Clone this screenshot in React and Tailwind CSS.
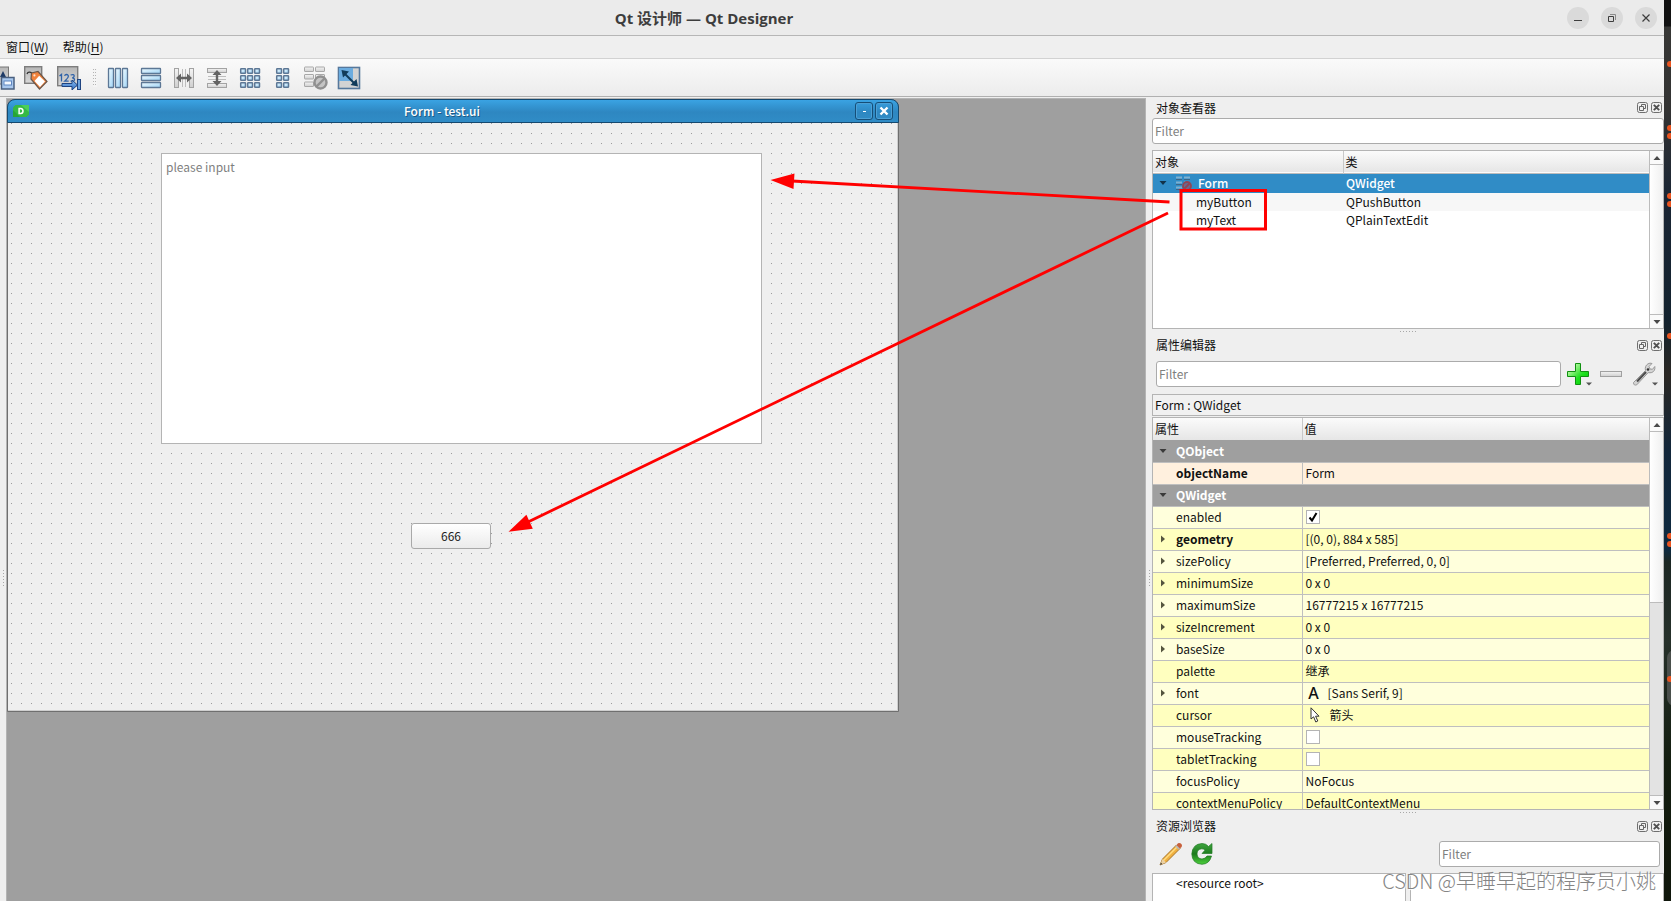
import React from 'react';

const properties = [
  { name: 'QObject', group: true },
  { name: 'objectName', value: 'Form', bold: true, bg: 'bg-[#fff0de]' },
  { name: 'QWidget', group: true },
  { name: 'enabled', check: true, checked: true, bg: 'bg-[#ffffdc]' },
  { name: 'geometry', value: '[(0, 0), 884 x 585]', bold: true, arrow: true, bg: 'bg-[#ffffbf]' },
  { name: 'sizePolicy', value: '[Preferred, Preferred, 0, 0]', arrow: true, bg: 'bg-[#ffffdc]' },
  { name: 'minimumSize', value: '0 x 0', arrow: true, bg: 'bg-[#ffffbf]' },
  { name: 'maximumSize', value: '16777215 x 16777215', arrow: true, bg: 'bg-[#ffffdc]' },
  { name: 'sizeIncrement', value: '0 x 0', arrow: true, bg: 'bg-[#ffffbf]' },
  { name: 'baseSize', value: '0 x 0', arrow: true, bg: 'bg-[#ffffdc]' },
  { name: 'palette', value: '继承', bg: 'bg-[#ffffbf]' },
  { name: 'font', value: '[Sans Serif, 9]', arrow: true, icon: 'font', bg: 'bg-[#ffffdc]' },
  { name: 'cursor', value: '箭头', icon: 'cursor', bg: 'bg-[#ffffbf]' },
  { name: 'mouseTracking', check: true, bg: 'bg-[#ffffdc]' },
  { name: 'tabletTracking', check: true, bg: 'bg-[#ffffbf]' },
  { name: 'focusPolicy', value: 'NoFocus', bg: 'bg-[#ffffdc]' },
  { name: 'contextMenuPolicy', value: 'DefaultContextMenu', bg: 'bg-[#ffffbf]' },
];

// gradients shared by all the icons
const IconDefs = () => (
  <svg className="absolute h-0 w-0" aria-hidden="true">
    <defs>
      <linearGradient id="blueBar" x1="0" y1="0" x2="1" y2="1">
        <stop offset="0" stopColor="#eefaff" />
        <stop offset="1" stopColor="#9fd4f6" />
      </linearGradient>
      <linearGradient id="greyBar" x1="0" y1="0" x2="0" y2="1">
        <stop offset="0" stopColor="#f4f4f4" />
        <stop offset="1" stopColor="#cfcfcf" />
      </linearGradient>
      <linearGradient id="panel" x1="0" y1="0" x2="0" y2="1">
        <stop offset="0" stopColor="#b6b6b6" />
        <stop offset="1" stopColor="#d8d8d8" />
      </linearGradient>
      <linearGradient id="plus" x1="0" y1="0" x2="1" y2="1">
        <stop offset="0.2" stopColor="#b4f7a0" />
        <stop offset="0.6" stopColor="#1fe01f" />
        <stop offset="1" stopColor="#00c800" />
      </linearGradient>
      <linearGradient id="refresh" x1="0" y1="0" x2="0" y2="1">
        <stop offset="0" stopColor="#3fa53f" />
        <stop offset="0.5" stopColor="#1c7a1c" />
        <stop offset="1" stopColor="#4cd03c" />
      </linearGradient>
      <linearGradient id="arrowBlue" x1="0" y1="0" x2="0" y2="1">
        <stop offset="0" stopColor="#8fc0f2" />
        <stop offset="1" stopColor="#2f6cc0" />
      </linearGradient>
    </defs>
  </svg>
);

const Icon = ({ children, size = 24 }) => (
  <svg width={size} height={size} viewBox={`0 0 ${size} ${size}`} fill="none" className="block" aria-hidden="true">
    {children}
  </svg>
);

const BuddyIcon = () => (
  <Icon>
    <rect x="1.5" y="1" width="16" height="17" fill="url(#panel)" stroke="#777" />
    <path d="M9 11 L12 5 L15 11 Z" fill="#1d3a66" />
    <rect x="10.5" y="11.5" width="12.5" height="11.5" fill="#a9c8ee" stroke="#4a6080" strokeWidth="1.5" />
    <rect x="13" y="15" width="7.5" height="4" fill="#f4f9ff" stroke="#5f86c0" />
  </Icon>
);

const TagIcon = () => (
  <Icon>
    <rect x="0.7" y="0.7" width="17" height="16.6" fill="url(#panel)" stroke="#7d7d7d" strokeWidth="1.4" />
    <path d="M3 8 C4 5 7 6 9 8" stroke="#333" strokeWidth="1.3" />
    <path d="M7.5 7 L14 5.5 L23 15.5 L15.5 23 L7 13 Z" fill="#f0823c" stroke="#6b5648" strokeWidth="1.2" />
    <path d="M15.2 9.8 L21 15.5 L16 21 L10.5 15 Z" fill="#fff" />
    <circle cx="10.4" cy="9.4" r="1.1" fill="#ffe0c8" />
  </Icon>
);

const TabOrderIcon = () => (
  <Icon>
    <rect x="0.7" y="0.7" width="20" height="19" fill="url(#panel)" stroke="#7d7d7d" strokeWidth="1.4" />
    <path
      d="M2.5 10 l2-1.6 v7 M7.5 9.8 q0.8-1.4 2-1.3 q2 0.2 1.8 2 q-0.2 1.4-3.6 4.6 h4 M13.6 9 q3.6-1.2 3.6 1 q0 1.6-2 1.8 q2.3 0.2 2.3 2 q-0.2 2.4-4 1.2"
      stroke="#2f62a8"
      strokeWidth="1.3"
    />
    <path d="M5 17.5 h10 v-3.5 l5.5 5 l-5.5 5 v-3.5 h-10 z" fill="url(#arrowBlue)" stroke="#1f4480" />
    <rect x="20.5" y="13.5" width="3" height="10" fill="#6fa4de" stroke="#1f4480" />
  </Icon>
);

const HLayoutIcon = () => (
  <Icon>
    {[2, 9, 16].map((x) => (
      <rect key={x} x={x + 0.5} y="2.5" width="5" height="19" rx="0.5" fill="url(#blueBar)" stroke="#5c7795" strokeWidth="1.3" />
    ))}
  </Icon>
);

const VLayoutIcon = () => (
  <Icon>
    {[2, 9, 16].map((y) => (
      <rect key={y} x="2.5" y={y + 0.5} width="19" height="5" rx="0.5" fill="url(#blueBar)" stroke="#5c7795" strokeWidth="1.3" />
    ))}
  </Icon>
);

const HSplitIcon = () => (
  <Icon>
    {[2.5, 17.5].map((x) => (
      <rect key={x} x={x} y="2.5" width="4" height="19" fill="url(#greyBar)" stroke="#a3a3a3" />
    ))}
    <path d="M10.5 3 v18 M13.5 3 v18" stroke="#bdbdbd" />
    <path d="M4 12 L9 7.5 V10.8 H15 V7.5 L20 12 L15 16.5 V13.2 H9 V16.5 Z" fill="#636363" />
  </Icon>
);

const VSplitIcon = () => (
  <Icon>
    {[2.5, 17.5].map((y) => (
      <rect key={y} x="2.5" y={y} width="19" height="4" fill="url(#greyBar)" stroke="#a3a3a3" />
    ))}
    <path d="M3 10.5 h18 M3 13.5 h18" stroke="#bdbdbd" />
    <path d="M12 4 L16.5 9 H13.2 V15 H16.5 L12 20 L7.5 15 H10.8 V9 H7.5 Z" fill="#636363" />
  </Icon>
);

const GridIcon = () => (
  <Icon>
    {[2, 9, 16].map((y) =>
      [2, 9, 16].map((x) => (
        <rect key={`${x}-${y}`} x={x + 0.7} y={y + 0.7} width="4.8" height="4.6" rx="0.6" fill="url(#blueBar)" stroke="#5c7795" strokeWidth="1.5" />
      ))
    )}
  </Icon>
);

const FormLayoutIcon = () => (
  <Icon>
    {[2, 9, 16].map((y) =>
      [5, 12].map((x) => (
        <rect key={`${x}-${y}`} x={x + 0.7} y={y + 0.7} width="4.8" height="4.6" rx="0.6" fill="url(#blueBar)" stroke="#5c7795" strokeWidth="1.5" />
      ))
    )}
  </Icon>
);

const BreakLayoutIcon = () => (
  <Icon>
    {[0.5, 8, 15.5].map((y) =>
      [0.5, 11.5].map((x) => (
        <rect key={`${x}-${y}`} x={x} y={y + 0.5} width="9" height="4.5" rx="0.5" fill="url(#greyBar)" stroke="#a8a8a8" />
      ))
    )}
    <circle cx="16.5" cy="16.5" r="6" fill="#c4c4c4" stroke="#909090" strokeWidth="2.4" />
    <path d="M12.5 20.5 L20.5 12.5" stroke="#909090" strokeWidth="2.4" />
  </Icon>
);

const AdjustSizeIcon = () => (
  <Icon>
    <rect x="1.5" y="1.5" width="21" height="21" fill="#d3d3d3" stroke="#56789c" strokeWidth="1.6" />
    <rect x="2" y="2" width="14" height="13" fill="#6cacdf" />
    <path d="M7 7 L18 18" stroke="#123c5a" strokeWidth="2" />
    <path d="M4.5 4 L12 5.5 L6 11.5 Z M21 20.5 L13.5 19 L19.5 13 Z" fill="#123c5a" />
  </Icon>
);

const toolsBefore = [
  { label: 'Edit Buddies', Glyph: BuddyIcon },
  { label: 'Edit Tags', Glyph: TagIcon },
  { label: 'Edit Tab Order', Glyph: TabOrderIcon },
];

const toolsAfter = [
  { label: 'Lay Out Horizontally', Glyph: HLayoutIcon },
  { label: 'Lay Out Vertically', Glyph: VLayoutIcon },
  { label: 'Horizontal Splitter', Glyph: HSplitIcon },
  { label: 'Vertical Splitter', Glyph: VSplitIcon },
  { label: 'Lay Out in a Grid', Glyph: GridIcon },
  { label: 'Lay Out in a Form', Glyph: FormLayoutIcon },
  { label: 'Break Layout', Glyph: BreakLayoutIcon },
  { label: 'Adjust Size', Glyph: AdjustSizeIcon },
];

const ToolButton = ({ label, Glyph }) => (
  <button type="button" aria-label={label} className="shrink-0">
    <Glyph />
  </button>
);

// the window runs off the left edge of the desktop, so the title is centred on the wider frame
const TitleBar = () => (
  <header className="-ml-64 grid h-9 shrink-0 grid-cols-[1fr_auto_1fr] items-center border-b border-[#b6b6b6] bg-[#ebebeb] px-[7px]">
    <span />
    <h1 className="font-['Open_Sans','Noto_Sans_CJK_SC',sans-serif] text-[15px] font-bold text-[#3d3d3d]">
      Qt 设计师 — Qt Designer
    </h1>
    <div className="flex justify-end gap-3">
      <button type="button" aria-label="Minimize" className="flex size-[22px] items-center justify-center rounded-full bg-[#dadada]">
        <Icon size={10}>
          <path d="M1 7.5 h8" stroke="#3d3d3d" />
        </Icon>
      </button>
      <button type="button" aria-label="Restore" className="flex size-[22px] items-center justify-center rounded-full bg-[#dadada]">
        <Icon size={10}>
          <path d="M1.5 3.5 h5 v5 h-5 z" stroke="#3d3d3d" />
          <path d="M3 1.5 h5.5 v5.5" stroke="#8a8a8a" />
        </Icon>
      </button>
      <button type="button" aria-label="Close" className="flex size-[22px] items-center justify-center rounded-full bg-[#dadada]">
        <Icon size={10}>
          <path d="M1.5 1.5 l7 7 M8.5 1.5 l-7 7" stroke="#3d3d3d" strokeWidth="1.2" />
        </Icon>
      </button>
    </div>
  </header>
);

const MenuBar = () => (
  <nav className="flex h-[23px] shrink-0 items-center gap-[14px] border-b border-[#d2d2d2] pl-[6px]">
    <button type="button">
      窗口(<span className="underline underline-offset-2">W</span>)
    </button>
    <button type="button">
      帮助(<span className="underline underline-offset-2">H</span>)
    </button>
  </nav>
);

const ToolBar = () => (
  <div className="flex h-[38px] shrink-0 items-center gap-[9px] overflow-hidden border-b border-[#b0b0b0] bg-linear-to-b from-[#fafafa] to-[#ececec]">
    <div className="-ml-[9px] flex shrink-0 gap-[9px]">
      {toolsBefore.map((tool) => (
        <ToolButton key={tool.label} {...tool} />
      ))}
    </div>
    <span className="ml-[3px] h-[18px] w-1 bg-[linear-gradient(90deg,transparent_1px,#f4f4f4_1px),linear-gradient(#b4b4b4_1px,#f4f4f4_1px)] bg-[size:2px_3px]" />
    {toolsAfter.map((tool) => (
      <ToolButton key={tool.label} {...tool} />
    ))}
  </div>
);

const FormWindow = () => (
  <section className="absolute top-0 left-0 flex h-[613px] w-[892px] flex-col rounded-t-lg border border-[#6f6f6f]">
    <div className="-mx-px -mt-px grid h-6 shrink-0 grid-cols-[auto_1fr_auto] items-center rounded-t-lg border border-[#15496f] bg-linear-to-b from-[#3aa3e3] from-0% via-[#2e87c1] via-55% to-[#308cc6] px-[5px]">
      <svg width="16" height="12" viewBox="0 0 16 12" aria-hidden="true">
        <path d="M2.5 0 H16 V9.5 L13.5 12 H0 V2.5 Z" fill="#35b944" />
        <path d="M8 0 H16 V7 Z" fill="#4ccf5a" />
        <path d="M0 5 L7 12 H0 Z" fill="#28a436" />
        <path d="M6.1 3.4 h1.6 q2.3 0.2 2.3 2.6 t-2.3 2.6 h-1.6 z" fill="none" stroke="#fff" strokeWidth="1.5" />
      </svg>
      <h2 className="text-center font-medium text-white [text-shadow:1px_1px_0_#1d5a86]">Form - test.ui</h2>
      <div className="flex justify-end gap-[2px]">
        <button type="button" aria-label="Minimize form" className="flex size-[18px] items-center justify-center rounded-[3px] border border-[#164e77] shadow-[inset_0_0_0_1px_#4ba0d6]">
          <span className="h-px w-[3px] bg-white" />
        </button>
        <button type="button" aria-label="Close form" className="flex size-[18px] items-center justify-center rounded-[3px] border border-[#164e77] shadow-[inset_0_0_0_1px_#4ba0d6]">
          <Icon size={10}>
            <path d="M1.5 1.5 l7 7 M8.5 1.5 l-7 7" stroke="#fff" strokeWidth="2.4" />
          </Icon>
        </button>
      </div>
    </div>
    <div className="relative flex-1 border-r border-b border-[#cfcfcf] bg-[#efefef] bg-[linear-gradient(90deg,transparent_1px,#efefef_1px),linear-gradient(#9c9c9c_1px,#efefef_1px)] bg-[size:10px_10px] bg-[position:3px_0]">
      <textarea
        aria-label="myText"
        placeholder="please input"
        className="absolute top-[30px] left-[153px] h-[291px] w-[601px] resize-none border border-[#b4b4b4] bg-white px-1 py-[4px] leading-[18px] outline-none placeholder:text-[#7f7f7f]"
      />
      <button
        type="button"
        className="absolute top-[400px] left-[403px] h-[26px] w-[80px] rounded-[3px] border border-[#a9a9a9] bg-linear-to-b from-white to-[#ebebeb] text-[#222]"
      >
        666
      </button>
    </div>
  </section>
);

const DockTitle = ({ title, className = '' }) => (
  <div className={`flex shrink-0 items-center justify-between pr-[2px] pl-1 ${className}`}>
    <h2 className="leading-[18px]">{title}</h2>
    <div className="flex gap-[3px]">
      <button type="button" aria-label={`Float ${title}`}>
        <Icon size={11}>
          <rect x="0.5" y="0.5" width="10" height="10" rx="2" stroke="#6f6f6f" />
          <path d="M2.5 4.5 h4 v4 h-4 z M4.5 4 v-1.5 h4 v4 h-1.5" stroke="#666" />
        </Icon>
      </button>
      <button type="button" aria-label={`Close ${title}`}>
        <Icon size={11}>
          <rect x="0.5" y="0.5" width="10" height="10" rx="2" stroke="#6f6f6f" />
          <path d="M2.8 2.8 l5.4 5.4 M8.2 2.8 l-5.4 5.4" stroke="#4f4f4f" strokeWidth="1.9" />
        </Icon>
      </button>
    </div>
  </div>
);

const Filter = ({ label, className = '' }) => (
  <input
    type="text"
    aria-label={label}
    placeholder="Filter"
    className={`h-[26px] min-w-0 rounded-[3px] border border-[#ababab] bg-white px-[2px] pb-[2px] outline-none placeholder:text-[#7f7f7f] ${className}`}
  />
);

const Triangle = ({ dir = 'down', color = '#4a4a4a' }) => (
  <svg width="8" height="8" viewBox="0 0 8 8" className="block" aria-hidden="true">
    {dir === 'down' && <path d="M0.5 2 H7.5 L4 6 Z" fill={color} />}
    {dir === 'up' && <path d="M0.5 6 H7.5 L4 2 Z" fill={color} />}
    {dir === 'right' && <path d="M2 0.5 V7.5 L6 4 Z" fill={color} />}
  </svg>
);

const ScrollBar = ({ name, thumb }) => (
  <div className="flex w-[14px] shrink-0 flex-col border-l border-[#bcbcbc] bg-[#e3e3e3]">
    <button type="button" aria-label={`Scroll ${name} up`} className="flex h-[14px] shrink-0 items-center justify-center border-b border-[#bcbcbc] bg-[#fafafa]">
      <Triangle dir="up" />
    </button>
    <div className="min-h-0 flex-1">
      <div className={`border-b border-[#bcbcbc] bg-linear-to-r from-white to-[#f0f0f0] ${thumb}`} />
    </div>
    <button type="button" aria-label={`Scroll ${name} down`} className="flex h-[14px] shrink-0 items-center justify-center border-t border-[#bcbcbc] bg-[#fafafa]">
      <Triangle />
    </button>
  </div>
);

const SplitHandle = () => (
  <div className="flex h-[6px] shrink-0 items-start justify-center pt-[2px]">
    <span className="h-px w-4 bg-[linear-gradient(90deg,#a8a8a8_1px,transparent_1px)] bg-[size:3px_1px]" />
  </div>
);

const SideHandle = () => (
  <div className="flex w-[6px] shrink-0 items-start justify-center pt-[473px]">
    <span className="h-[18px] w-px bg-[linear-gradient(#a8a8a8_1px,transparent_1px)] bg-[size:1px_3px]" />
  </div>
);

const ObjectInspector = () => (
  <section className="flex shrink-0 flex-col">
    <DockTitle title="对象查看器" className="h-[21px]" />
    <Filter label="Filter objects" />
    <div className="mt-[6px] flex h-[179px] border border-[#b4b4b4] bg-white">
      <div className="min-w-0 flex-1">
        <table className="w-full table-fixed border-collapse text-left">
          <thead>
            <tr className="h-[22px] border-b border-[#bcbcbc] bg-linear-to-b from-[#fbfbfb] to-[#e6e6e6]">
              <th className="w-[190px] border-r border-[#c8c8c8] px-[2px] py-0 font-normal">对象</th>
              <th className="px-[2px] py-0 font-normal">类</th>
            </tr>
          </thead>
          <tbody>
            <tr className="h-5 bg-[#308cc6] font-medium text-white">
              <td className="p-0">
                <div className="flex items-center pl-[6px]">
                  <Triangle color="#12334a" />
                  <svg width="16" height="16" viewBox="0 0 16 16" className="mr-[6px] ml-[9px]" aria-hidden="true">
                    <path d="M0 2.5 h6 M8 2.5 h6 M0 7.5 h6 M8 7.5 h5 M0 12.5 h6" stroke="#7fb0d0" strokeWidth="2" />
                    <path d="M0 4.5 h6 M8 4.5 h6 M0 9.5 h6 M0 14.5 h6" stroke="#3c6587" />
                    <circle cx="11" cy="11" r="4" fill="#6a6a90" stroke="#8f4656" strokeWidth="1.8" />
                    <path d="M8.5 13.5 l5-5" stroke="#8f4656" strokeWidth="1.8" />
                  </svg>
                  Form
                </div>
              </td>
              <td className="px-[3px] py-0">QWidget</td>
            </tr>
            <tr className="h-[18px] bg-[#f7f7f7]">
              <td className="py-0 pl-[43px]">myButton</td>
              <td className="px-[3px] py-0">QPushButton</td>
            </tr>
            <tr className="h-[18px]">
              <td className="py-0 pl-[43px]">myText</td>
              <td className="px-[3px] py-0">QPlainTextEdit</td>
            </tr>
          </tbody>
        </table>
      </div>
      <ScrollBar name="objects" thumb="h-full border-b-0" />
    </div>
  </section>
);

const PropertyValue = ({ prop }) => {
  if (prop.check) {
    return (
      <input
        type="checkbox"
        aria-label={prop.name}
        defaultChecked={prop.checked}
        className="block size-[14px] appearance-none border border-[#b4b4b4] bg-white checked:bg-[url('data:image/svg+xml,%3Csvg%20xmlns=%22http://www.w3.org/2000/svg%22%20viewBox=%220%200%2012%2012%22%3E%3Cpath%20d=%22M2.5%206.5%20L5%209.5%20L9.5%202%22%20fill=%22none%22%20stroke=%22black%22%20stroke-width=%222%22/%3E%3C/svg%3E')]"
      />
    );
  }
  return (
    <div className="flex items-center">
      {prop.icon === 'font' && (
        <span className="mr-[6px] w-4 text-center font-['Noto_Sans',sans-serif] text-[16px] leading-5 font-medium">A</span>
      )}
      {prop.icon === 'cursor' && (
        <svg width="16" height="16" viewBox="0 0 16 16" className="mr-2" aria-hidden="true">
          <path d="M5 0.8 V12 L7.6 9.8 L9.8 15 L11.8 14 L9.6 9.2 H13 Z" fill="#fff" stroke="#333" />
        </svg>
      )}
      {prop.value}
    </div>
  );
};

const PropertyRow = ({ prop }) => {
  if (prop.group) {
    return (
      <tr className="h-[22px] border-b border-[#bfbfbf] bg-[#9f9f9f] font-bold text-white">
        <th colSpan={2} className="p-0 text-left">
          <div className="flex items-center gap-[9px] pl-[6px]">
            <Triangle color="#3a3a3a" />
            {prop.name}
          </div>
        </th>
      </tr>
    );
  }
  return (
    <tr className={`h-[22px] border-b border-[#bfbfbf] ${prop.bg}`}>
      <td className="border-r border-[#bfbfbf] p-0">
        <div className="flex items-center gap-[9px] pl-[6px]">
          <span className="w-2">{prop.arrow && <Triangle dir="right" color="#55553f" />}</span>
          <span className={prop.bold ? 'font-bold' : ''}>{prop.name}</span>
        </div>
      </td>
      <td className="px-[3px] py-0">
        <PropertyValue prop={prop} />
      </td>
    </tr>
  );
};

const PropertyEditor = () => (
  <section className="flex min-h-0 flex-1 flex-col">
    <DockTitle title="属性编辑器" className="h-[20px]" />
    <div className="mt-[6px] flex shrink-0 items-center pl-1">
      <Filter label="Filter properties" className="flex-1" />
      <button type="button" aria-label="Add property" className="ml-[5px] flex items-end">
        <Icon>
          <path d="M9.5 1.5 h5 v8 h8 v5 h-8 v8 h-5 v-8 h-8 v-5 h8 z" fill="url(#plus)" stroke="#109010" strokeLinejoin="round" />
        </Icon>
        <svg width="6" height="4" viewBox="0 0 6 4" className="-ml-1" aria-hidden="true">
          <path d="M0 0.5 H6 L3 3.5 Z" fill="#555" />
        </svg>
      </button>
      <button type="button" aria-label="Remove property" className="ml-[7px]">
        <Icon>
          <rect x="1.5" y="9.5" width="21" height="5" fill="url(#greyBar)" stroke="#a0a0a0" />
        </Icon>
      </button>
      <button type="button" aria-label="Configure" className="mr-[6px] ml-[9px] flex items-end">
        <Icon>
          <path
            d="M1.5 20.5 L13.5 8.5 Q12.5 4 16 1.8 Q18 0.6 20 1.5 L17 4.5 L18 7 L20.5 7.3 L22.8 4.5 Q23.5 9 19.8 10.5 Q18 11 16.2 10.6 L4.8 22.8 Q1.5 24 1.5 20.5 Z"
            fill="#d4d4d4"
            stroke="#9a9a9a"
          />
          <path d="M5 19.5 L14 10" stroke="#4a4a4a" strokeWidth="2" />
          <circle cx="16" cy="7.5" r="1.3" fill="#333" />
        </Icon>
        <svg width="6" height="4" viewBox="0 0 6 4" className="-ml-1" aria-hidden="true">
          <path d="M0 0.5 H6 L3 3.5 Z" fill="#555" />
        </svg>
      </button>
    </div>
    <p className="mt-[7px] flex h-[22px] shrink-0 items-center border border-[#b4b4b4] bg-[#f1f1f1] px-[2px]">Form : QWidget</p>
    <div className="mt-px flex min-h-0 flex-1 border border-[#b4b4b4] bg-white">
      <div className="min-w-0 flex-1 overflow-hidden">
        <table className="w-full table-fixed border-collapse text-left">
          <thead>
            <tr className="h-[22px] bg-linear-to-b from-[#fbfbfb] to-[#e6e6e6]">
              <th className="w-[149px] border-r border-[#c8c8c8] px-[2px] py-0 font-normal">属性</th>
              <th className="px-[2px] py-0 font-normal">值</th>
            </tr>
          </thead>
          <tbody>
            {properties.map((prop) => (
              <PropertyRow key={prop.name} prop={prop} />
            ))}
          </tbody>
        </table>
      </div>
      <ScrollBar name="properties" thumb="h-[47%]" />
    </div>
  </section>
);

const ResourceBrowser = () => (
  <section className="flex shrink-0 flex-col">
    <DockTitle title="资源浏览器" className="h-[20px]" />
    <div className="mt-[5px] flex items-center pr-1 pl-[7px]">
      <button type="button" aria-label="Edit resources">
        <Icon>
          <path d="M1 23 L3.5 17 L17.5 3 L21 6.5 L7 20.5 Z" fill="#f0b040" stroke="#a8762a" />
          <path d="M4.5 18.5 L18.5 4.5" stroke="#ffdc80" strokeWidth="1.4" />
          <path d="M1 23 L3.5 17 L7 20.5 Z" fill="#ecd2a4" />
          <path d="M1 23 L2 20.6 L3.4 22 Z" fill="#444" />
          <path d="M16.2 4.3 L19.7 7.8 L21 6.5 L17.5 3 Z" fill="#b8b8b8" />
          <path d="M17.5 3 L19 1.2 Q21 0.5 22.6 2.2 Q23.4 4 22.6 5 L21 6.5 Z" fill="#c8603c" />
        </Icon>
      </button>
      <button type="button" aria-label="Reload" className="ml-[7px]">
        <Icon>
          <path
            d="M12 1.5 Q16 1.5 18.5 4.5 L22 1.5 V11.5 H12 L15 8.2 Q13.6 6.8 11.8 6.8 Q7 7.2 7 12 Q7.4 16.8 12 17 Q15.5 16.8 17 14 L21.5 14 Q19.5 22 12 22.3 Q2.2 21.8 1.8 12 Q2.4 2 12 1.5 Z"
            fill="url(#refresh)"
            stroke="#1f7a22"
            strokeWidth="0.7"
          />
        </Icon>
      </button>
      <Filter label="Filter resources" className="ml-auto w-[221px]" />
    </div>
    <div className="mt-[6px] grid h-[28px] grid-cols-2 gap-1">
      <div className="border border-b-0 border-[#b4b4b4] bg-white pl-[23px] leading-[18px]">&lt;resource root&gt;</div>
      <div className="border border-b-0 border-[#b4b4b4] bg-white" />
    </div>
  </section>
);

const launcherDots = ['top-[61px]', 'top-[125px]', 'top-[133px]', 'top-[193px]', 'top-[201px]', 'top-[333px]', 'top-[533px]', 'top-[541px]', 'top-[676px]'];

const DesktopStrip = () => (
  <aside className="relative w-[7px] shrink-0 overflow-hidden bg-[linear-gradient(#121212_0,#121212_26px,#373735_27px,#333_110px,#1a2534_200px,#13222e_320px,#2b2824_375px,#12263a_450px,#0e2a40_550px,#1c2723_562px,#26302a_640px,#141e10_760px,#10160b_901px)]">
    <span className="absolute top-[650px] left-[3px] h-[56px] w-5 rounded-lg bg-[#4a4f4b]" />
    {launcherDots.map((top) => (
      <span key={top} className={`absolute left-[3px] size-[6px] rounded-full bg-[#e95420] ${top}`} />
    ))}
  </aside>
);

const Annotations = () => (
  <svg className="pointer-events-none absolute top-0 left-0" width="1300" height="560" viewBox="0 0 1300 560" fill="none" aria-hidden="true">
    <path d="M1169.5 202 L792 181" stroke="#f00" strokeWidth="2.8" />
    <path d="M770.5 180 L794.5 173.5 L793.5 189 Z" fill="#f00" />
    <path d="M1168 213 L528 522" stroke="#f00" strokeWidth="2.8" />
    <path d="M508.5 531.7 L526.4 514.7 L532.8 528.7 Z" fill="#f00" />
    <rect x="1181" y="190.5" width="84.5" height="38.5" stroke="#f00" strokeWidth="3" />
  </svg>
);

const App = () => (
  <div className="relative flex h-screen overflow-hidden bg-[#efefef] font-['Noto_Sans_CJK_SC',sans-serif] text-[12px] leading-[18px] text-[#111]">
    <IconDefs />
    <div className="flex min-w-0 flex-1 flex-col">
      <TitleBar />
      <MenuBar />
      <ToolBar />
      <div className="flex min-h-0 flex-1">
        <SideHandle />
        <main className="relative mt-px min-w-0 flex-1 overflow-hidden border-t border-r border-l border-[#b4b4b4] bg-[#9f9f9f]">
          <FormWindow />
        </main>
        <SideHandle />
        <div className="flex w-[512px] shrink-0 flex-col">
          <ObjectInspector />
          <SplitHandle />
          <PropertyEditor />
          <SplitHandle />
          <ResourceBrowser />
        </div>
      </div>
    </div>
    <DesktopStrip />
    <Annotations />
    <p className="pointer-events-none absolute right-[15px] bottom-[5px] text-[20px] leading-[30px] font-light text-[#858585] [text-shadow:1px_1px_1px_#fff]">
      CSDN @早睡早起的程序员小姚
    </p>
  </div>
);

export default App;
